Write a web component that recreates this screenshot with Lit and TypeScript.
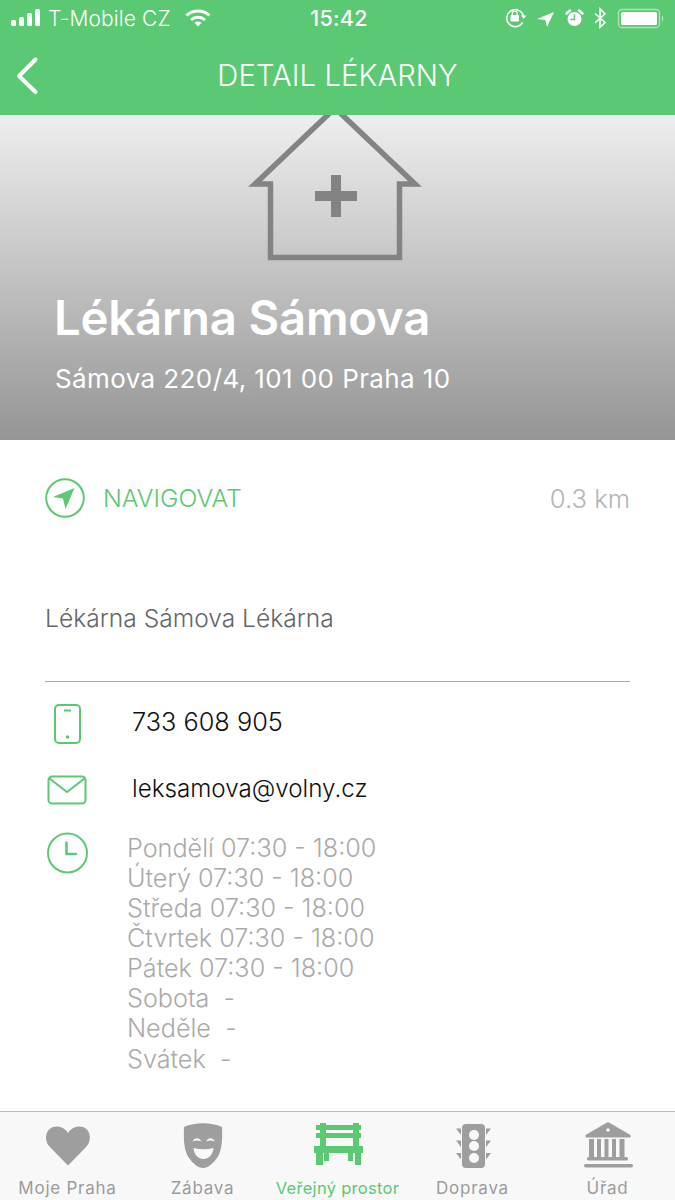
import { LitElement, html, css } from "lit";
import { customElement } from "lit/decorators.js";

const HOURS = ["Pondělí 07:30 - 18:00","Úterý 07:30 - 18:00","Středa 07:30 - 18:00","Čtvrtek 07:30 - 18:00","Pátek 07:30 - 18:00","Sobota  -","Neděle  -","Svátek  -"];

@customElement("app-root")
export class AppRoot extends LitElement {
  static styles = css`
    :host { display: block; font-family: Inter, "Noto Sans", sans-serif; }
    * { box-sizing: border-box; }
    .page { width: 675px; height: 1200px; display: flex; flex-direction: column; background: #fff; overflow: hidden; }
    .head { background: #5bc873; color: #fff; height: 115px; flex: none; display: flex; flex-direction: column; }
    .status { height: 36px; display: grid; grid-template-columns: 1fr auto 1fr; align-items: center; }
    .sleft { display: flex; align-items: center; padding-left: 11px; }
    .carrier { font-size: 21px; font-weight: 300; margin-left: 8px; margin-right: 14px; letter-spacing: .1px; }
    .clock { font-size: 21.5px; font-weight: 500; letter-spacing: .3px; padding-left: 3px; }
    .sright { display: flex; justify-content: flex-end; }
    .nav { flex: 1; display: grid; grid-template-columns: 1fr auto 1fr; align-items: center; }
    .back { margin-left: 14px; display: block; }
    .title { font-size: 29.2px; font-weight: 300; letter-spacing: .1px; }
    .hero { height: 325px; flex: none; background: linear-gradient(#eeeeee, #959595); display: flex; flex-direction: column; color: #fff; overflow: hidden; }
    .house { display: block; margin-left: 245px; }
    .hname { font-size: 47.3px; font-weight: 600; margin: 25px 0 0 54px; line-height: 56px; letter-spacing: -.2px; }
    .haddr { font-size: 26px; font-weight: 400; letter-spacing: .4px; margin: 17px 0 0 55px; line-height: 32px; }
    .body { flex: 1; padding: 0 45px; display: flex; flex-direction: column; }
    .navrow { display: flex; align-items: center; margin-top: 38px; height: 40px; }
    .navlabel { color: #5cc874; font-size: 24.8px; margin-left: 18px; flex: 1; font-weight: 300; }
    .dist { color: #b4b4b4; font-size: 25.6px; font-weight: 300; }
    .desc { color: #666; font-size: 24.6px; font-weight: 300; margin-top: 80px; line-height: 40px; border-bottom: 1px solid #aaa; height: 84px; }
    .row { display: grid; grid-template-columns: 87px 1fr; align-items: center; color: #111; }
    .row svg { display: block; }
    .phone { margin-top: 22px; height: 40px; font-size: 25.3px; font-weight: 300; }
    .phone div { margin-top: -5px; }
    .mail { margin-top: 31px; height: 30px; font-size: 24.2px; font-weight: 300; }
    .mail div { margin-top: -3px; }
    .hours { display: grid; grid-template-columns: 82px 1fr; margin-top: 27px; }
    .hlist { color: #aaa; font-size: 25.2px; font-weight: 300; line-height: 30.15px; white-space: pre; margin-top: .5px; }
    .tabs { height: 89px; flex: none; background: #f8f8f8; border-top: 1px solid #bbb; display: grid; grid-template-columns: repeat(5, 135px); }
    .tab { display: flex; flex-direction: column; align-items: center; padding-top: 10px; color: #9b9b9b; font-size: 17px; font-weight: 400; letter-spacing: .75px; }
    .tab span { margin-top: 8px; line-height: 20px; white-space: nowrap; }
    .tab.on { color: #5cc874; font-size: 16.5px; letter-spacing: .3px; }
    .tab svg { display: block; }
  `;

  render() {
    const g = "#5bc873", t = "#9e9e9e", bg = "#f8f8f8";
    return html`<div class="page">
      <div class="head">
        <div class="status">
          <div class="sleft">
            <svg width="29" height="18" viewBox="0 0 29 18" fill="#fff"><rect x="0" y="11" width="5" height="6" rx="1.500"/><rect x="8" y="8" width="5" height="9" rx="1.500"/><rect x="16" y="4" width="5" height="13" rx="1.500"/><rect x="24" y="0" width="5" height="17" rx="1.500"/></svg>
            <span class="carrier">T-Mobile CZ</span>
            <svg width="26" height="18" viewBox="0 0 26 18" fill="none" stroke="#fff" stroke-width="3"><path d="M1.500 6.500C8 .5 18 .5 24.500 6.500"/><path d="M6 11c4-3.600 10-3.600 14 0"/><path d="M13 17.600l-3.600-3.800c2-1.600 5.200-1.600 7.200 0z" fill="#fff" stroke="none"/></svg>
          </div>
          <div class="clock">15:42</div>
          <div class="sright">
            <svg width="170" height="24" viewBox="505 6 170 24">
              <path d="M522.600 22.400a8.500 8.500 0 1 1 .9-6.200" fill="none" stroke="#fff" stroke-width="1.600"/>
              <path d="M521 15.500h5.500l-2.700 3.200z" fill="#fff"/>
              <rect x="510.500" y="15" width="8.500" height="6.500" rx="1" fill="#fff"/>
              <path d="M512.300 15v-1.500a2.400 2.400 0 0 1 4.800 0V15" fill="none" stroke="#fff" stroke-width="1.300"/>
              <path d="M554 12l-7 15-1.600-7L537 19z" fill="#fff"/>
              <circle cx="574.500" cy="19" r="7" fill="#fff"/>
              <path d="M574.500 14.500V19.500h-4" fill="none" stroke="${g}" stroke-width="1.500"/>
              <path d="M566.500 13.500l3.500-3M582.500 13.500l-3.500-3" stroke="#fff" stroke-width="2.500" stroke-linecap="round"/>
              <path d="M595 13.500l10 9-5 4.800V9l5 4.800-10 9" fill="none" stroke="#fff" stroke-width="1.600"/>
              <rect x="618.500" y="9.500" width="41" height="18" rx="3.500" fill="none" stroke="#fff" stroke-opacity=".5" stroke-width="1.300"/>
              <rect x="621" y="12" width="36" height="13" rx="1.500" fill="#fff"/>
              <path d="M662 15.500c1.500.5 1.500 5.500 0 6z" fill="#fff" fill-opacity=".6"/>
            </svg>
          </div>
        </div>
        <div class="nav">
          <svg class="back" width="26" height="40" viewBox="0 0 26 40" fill="none" stroke="#fff" stroke-width="4" stroke-linecap="round" stroke-linejoin="round"><path d="M21.500 3.500 5 20l16.500 16"/></svg>
          <div class="title">DETAIL LÉKARNY</div>
          <div></div>
        </div>
      </div>

      <div class="hero">
        <svg class="house" width="180" height="150" viewBox="245 115 180 150" fill="none">
          <path d="M270.500 184H255L335 108l80 76H399.500V257.500H270.500Z" stroke="#838383" stroke-width="5.500" stroke-linejoin="miter"/>
          <path d="M331 175h10v16h16v10h-16v16h-10v-16h-16v-10h16z" fill="#838383"/>
        </svg>
        <div class="hname">Lékárna Sámova</div>
        <div class="haddr">Sámova 220/4, 101 00 Praha 10</div>
      </div>

      <div class="body">
        <div class="navrow">
          <svg width="40" height="40" viewBox="0 0 40 40" fill="none"><circle cx="20" cy="20" r="18.800" stroke="${g}" stroke-width="2"/><path d="M29.500 10 20.500 31l-2.500-10.500-10-1.500z" fill="${g}"/></svg>
          <div class="navlabel">NAVIGOVAT</div>
          <div class="dist">0.3 km</div>
        </div>
        <div class="desc">Lékárna Sámova Lékárna</div>
        <div class="row phone">
          <svg width="87" height="40" viewBox="0 0 87 40" fill="none" stroke="${g}" stroke-width="2"><rect x="10" y="1" width="25" height="38" rx="4"/><path d="M19 6.500h7"/><circle cx="22.500" cy="33" r="1.800" fill="${g}" stroke="none"/></svg>
          <div>733 608 905</div>
        </div>
        <div class="row mail">
          <svg width="87" height="30" viewBox="0 0 87 30" fill="none" stroke="${g}" stroke-width="2" stroke-linejoin="round"><rect x="3.500" y="1.500" width="37" height="27" rx="3.500"/><path d="M4.500 3.500 22 17 39.500 3.500"/></svg>
          <div>leksamova@volny.cz</div>
        </div>
        <div class="hours">
          <svg width="82" height="42" viewBox="0 0 82 42" fill="none" stroke="${g}" stroke-width="2"><circle cx="22.500" cy="21" r="19.500"/><path d="M21.500 10.500v11.500h9.500" stroke-width="2.500" stroke-linecap="round" stroke-linejoin="round"/></svg>
          <div class="hlist">${HOURS.map(h => html`<div>${h}</div>`)}</div>
        </div>
      </div>

      <div class="tabs">
        <div class="tab">
          <svg width="52" height="48" viewBox="0 0 52 48" fill="${t}"><path d="M26 43.500 7.500 24.500C1 17.500 4 4.500 14.500 4.500c5 0 9 2.500 11.500 6.500 2.500-4 6.500-6.500 11.500-6.500C48 4.500 51 17.500 44.500 24.500z"/></svg>
          <span>Moje Praha</span>
        </div>
        <div class="tab">
          <svg width="52" height="48" viewBox="0 0 52 48" fill="${t}"><path d="M7 5C18 0 34 0 45 5c.7 14-.5 25-5 31-3.500 5-9 10-14 10s-10.500-5-14-10C7.500 30 6.300 19 7 5z"/><path d="M15.500 19.500c2-4.500 7-4.500 9 0-3-1.500-6-1.500-9 0zM29 19.500c2-4.500 7-4.500 9 0-3-1.500-6-1.500-9 0zM16.500 26c6.500 1.800 13.500 1.800 20 0-.6 7-5 11-10 11s-9.400-4-10-11z" fill="${bg}"/></svg>
          <span>Zábava</span>
        </div>
        <div class="tab on">
          <svg width="52" height="48" viewBox="0 0 52 48" fill="${g}"><rect x="4" y="3" width="45" height="5"/><rect x="4" y="11" width="45" height="5"/><rect x="8" y="1" width="6" height="24"/><rect x="41" y="1" width="6" height="24"/><rect x="2" y="24" width="49" height="7"/><rect x="4" y="30" width="7" height="13"/><rect x="12" y="30" width="5" height="9"/><rect x="36" y="30" width="5" height="9"/><rect x="43" y="30" width="6" height="13"/></svg>
          <span>Veřejný prostor</span>
        </div>
        <div class="tab">
          <svg width="52" height="48" viewBox="0 0 52 48" fill="${t}"><rect x="15" y="2" width="23" height="44" rx="4"/><circle cx="27" cy="13" r="5" fill="${bg}"/><circle cx="27" cy="24" r="5" fill="${bg}"/><circle cx="27" cy="36" r="5" fill="${bg}"/><path d="M9 6.500h5v6.500zM9 18.500h5v6.500zM9 31h5v6.500zM44 6.500h-5v6.500zM44 18.500h-5v6.500zM44 31h-5v6.500z"/></svg>
          <span>Doprava</span>
        </div>
        <div class="tab">
          <svg width="52" height="48" viewBox="0 0 52 48" fill="${t}"><path d="M26 0 48.500 13v2.500h-45V13z"/><circle cx="26" cy="8" r="1.800" fill="${bg}"/><path d="M7 17h5v18H7zM15 17h4v18h-4zM22.500 17h4v18h-4zM30 17h4v18h-4zM37.500 17h5v18h-5z"/><rect x="5" y="35" width="41" height="3.500" rx="1.500"/><rect x="2" y="42" width="49" height="3.500" rx="1.700"/></svg>
          <span>Úřad</span>
        </div>
      </div>
    </div>`;
  }
}
